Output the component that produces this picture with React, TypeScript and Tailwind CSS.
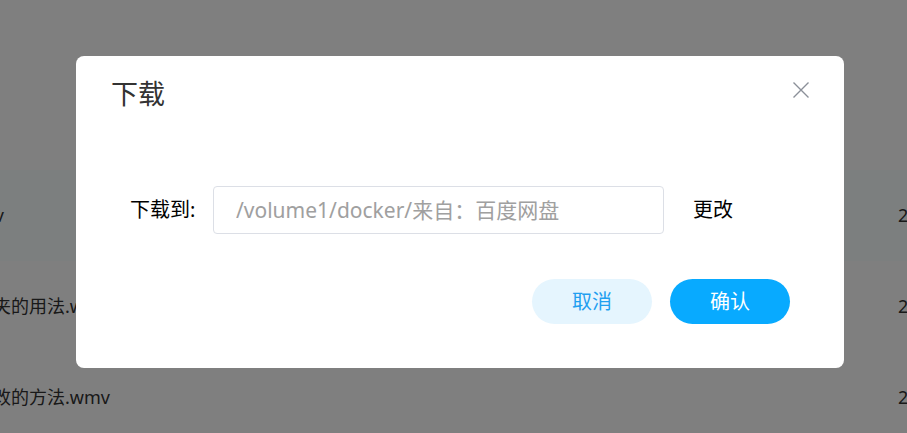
import React from "react";

interface Row {
  name: string;
  date: string;
  offset: string;
}

const rows: Row[] = [
  { name: "安装套件.wmv", date: "2021-05-12 10:24", offset: "-ml-[113px]" },
  { name: "群晖共享文件夹的用法.wmv", date: "2021-05-12 10:20", offset: "-ml-[115px]" },
  { name: "群晖密码修改的方法.wmv", date: "2021-05-11 18:02", offset: "-ml-[97px]" },
];

export default function App() {
  return (
    <div
      className="relative w-[907px] h-[433px] overflow-hidden bg-white"
      style={{ fontFamily: '"Noto Sans", "Noto Sans CJK SC", sans-serif' }}
    >
      {/* File list behind the dialog */}
      <div className="pt-[170px]">
        {rows.map((row, i) => (
          <div
            key={row.name}
            className={
              "flex items-center h-[91px] text-[18px] text-[#333] " +
              (i === 0 ? "bg-[#f8feff]" : "")
            }
          >
            <div className="w-[898px] shrink-0">
              <div className={"whitespace-nowrap " + row.offset}>{row.name}</div>
            </div>
            <div className="whitespace-nowrap">{row.date}</div>
          </div>
        ))}
      </div>

      {/* Overlay */}
      <div className="absolute inset-0 bg-black/50 pt-[56px] pl-[76px]">
        <div className="w-[768px] h-[312px] bg-white rounded-lg flex flex-col">
          <div className="flex items-start justify-between pl-[35px] pr-[34px] pt-[18px]">
            <h2 className="text-[27px] leading-[40px] text-[#333]">下载</h2>
            <button className="mt-[7px] w-[18px] h-[18px] flex items-center justify-center text-[#8b9099]">
              <svg width="18" height="18" viewBox="0 0 18 18" fill="none">
                <path d="M1.5 1.5L16.5 16.5M16.5 1.5L1.5 16.5" stroke="currentColor" strokeWidth="1.4" />
              </svg>
            </button>
          </div>

          <div className="flex items-center mt-[72px] pl-[54px]">
            <span className="text-[20px] text-black w-[83px] shrink-0">下载到:</span>
            <input
              className="w-[451px] h-[48px] border border-[#dcdfe6] rounded-[4px] px-[22px] text-[21px] outline-none placeholder:text-[#a0a0a0]"
              placeholder="/volume1/docker/来自：百度网盘"
            />
            <span className="ml-[29px] text-[20px] text-black">更改</span>
          </div>

          <div className="flex justify-end gap-[18px] mt-[45px] pr-[54px]">
            <button className="w-[120px] h-[45px] rounded-full bg-[#e5f5fe] text-[#1f9ff0] text-[20px]">
              取消
            </button>
            <button className="w-[120px] h-[45px] rounded-full bg-[#08aaff] text-white text-[20px]">
              确认
            </button>
          </div>
        </div>
      </div>
    </div>
  );
}
